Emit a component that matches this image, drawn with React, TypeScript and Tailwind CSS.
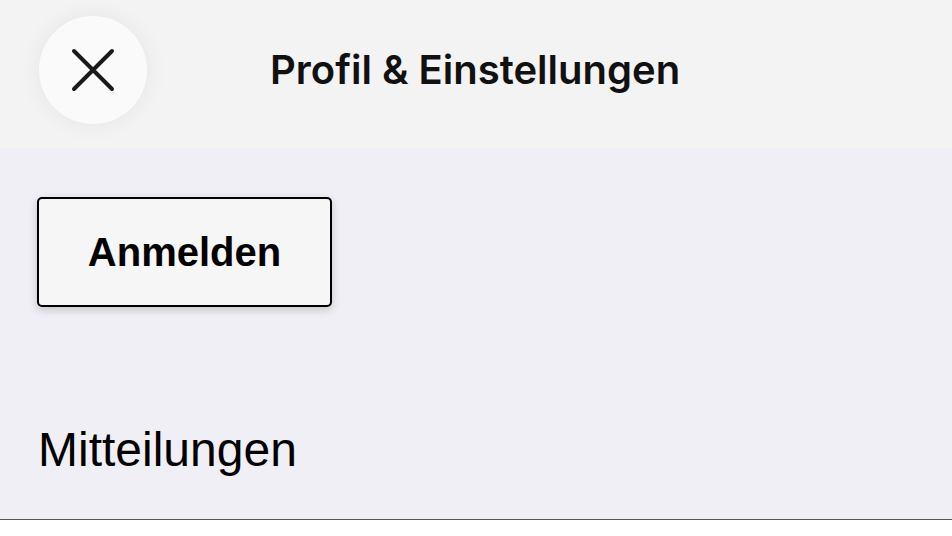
import React from "react";

export default function App() {
  return (
    <div className="w-[952px] h-[536px] flex flex-col bg-[#f0eff5] overflow-hidden">
      <div className="h-[148px] bg-[#f3f3f4] flex items-start">
        <div className="ml-[39px] mt-[16px] w-[108px] h-[108px] rounded-full bg-[#fafafa] shadow-[0_0_24px_rgba(0,0,0,0.06)] flex items-center justify-center">
          <svg width="44" height="44" viewBox="0 0 44 44" fill="none">
            <path d="M3 3L41 41M41 3L3 41" stroke="#1a1a1a" strokeWidth="4" strokeLinecap="round" />
          </svg>
        </div>
        <div
          className="ml-[123px] mt-[46px] text-[40px] leading-[48px] font-semibold text-[#111]"
          style={{ fontFamily: "Inter, 'Noto Sans', sans-serif" }}
        >
          Profil &amp; Einstellungen
        </div>
      </div>
      <div className="flex-1 flex flex-col">
        <div className="pl-[37px] pt-[49px]">
          <button
            className="w-[295px] h-[110px] border-2 border-black rounded-[5px] bg-[#f6f6f6] shadow-[0_3px_8px_rgba(0,0,0,0.18)] flex items-center justify-center text-[40px] font-bold text-black"
            style={{ fontFamily: "'Liberation Sans', Arial, sans-serif" }}
          >
            Anmelden
          </button>
        </div>
        <div
          className="pl-[38px] mt-[115px] text-[48px] leading-[56px] text-black"
          style={{ fontFamily: "'Liberation Sans', Arial, sans-serif" }}
        >
          Mitteilungen
        </div>
        <div className="mt-auto h-[17px] border-t border-[#555] bg-white" />
      </div>
    </div>
  );
}
